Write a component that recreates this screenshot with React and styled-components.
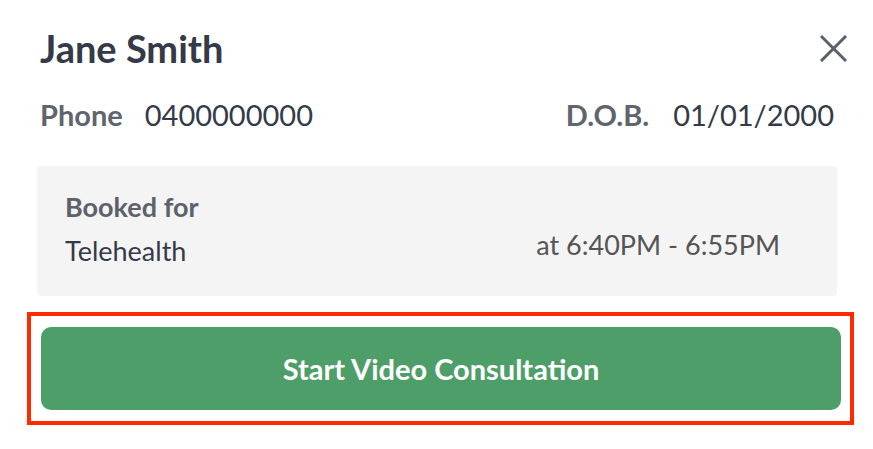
import React from 'react';
import styled, { createGlobalStyle } from 'styled-components';

const GlobalStyle = createGlobalStyle`
  body {
    margin: 0;
    background: #ffffff;
    font-family: Lato, "Open Sans", sans-serif;
  }
`;

const Panel = styled.div`
  width: 800px;
  padding: 26px 36px 0 37px;
`;

const Header = styled.div`
  display: flex;
  align-items: center;
  justify-content: space-between;
  padding-left: 3px;
`;

const Name = styled.h1`
  margin: 0;
  font-size: 38px;
  font-weight: 700;
  line-height: 1.2;
  color: #343a48;
`;

const CloseButton = styled.button`
  display: flex;
  align-items: center;
  justify-content: center;
  margin-right: -10px;
  padding: 0;
  border: none;
  background: transparent;
  color: #5c6068;
  cursor: pointer;
`;

const InfoRow = styled.div`
  display: flex;
  justify-content: space-between;
  margin-top: 26px;
  padding: 0 3px;
`;

const Field = styled.div`
  display: flex;
  align-items: baseline;
  gap: ${(p) => p.$gap || 22}px;
`;

const Label = styled.span`
  font-size: 29px;
  font-weight: 700;
  line-height: 1.2;
  color: #60646d;
`;

const Value = styled.span`
  font-size: 29px;
  font-weight: 400;
  line-height: 1.2;
  color: #343a48;
`;

const BookingCard = styled.div`
  display: flex;
  justify-content: space-between;
  margin-top: 34px;
  padding: 23px 57px 27px 28px;
  background: #f4f4f4;
  border-radius: 4px;
`;

const BookingInfo = styled.div`
  display: flex;
  flex-direction: column;
  gap: 9px;
`;

const BookingLabel = styled.span`
  font-size: 27px;
  font-weight: 700;
  line-height: 1.3;
  color: #5c616b;
`;

const BookingType = styled.span`
  font-size: 27px;
  line-height: 1.3;
  color: #343a48;
`;

const BookingTime = styled.span`
  align-self: flex-end;
  margin-bottom: 6px;
  font-size: 27px;
  line-height: 1.3;
  color: #555555;
`;

const Highlight = styled.div`
  box-sizing: border-box;
  width: 827px;
  margin: 16px 0 0 -10px;
  padding: 11px 9px 11px 10px;
  border: 4px solid #ff2a00;
`;

const StartButton = styled.button`
  display: block;
  width: 100%;
  height: 83px;
  border: none;
  border-radius: 10px;
  background: #4e9e69;
  color: #ffffff;
  font-family: inherit;
  font-size: 29px;
  font-weight: 700;
  cursor: pointer;
`;

const CloseIcon = () => (
  <svg width="27" height="27" viewBox="0 0 27 27" fill="none">
    <path d="M2 2L25 25M25 2L2 25" stroke="currentColor" strokeWidth="3" strokeLinecap="square" />
  </svg>
);

export default function App() {
  return (
    <>
      <GlobalStyle />
      <Panel>
        <Header>
          <Name>Jane Smith</Name>
          <CloseButton aria-label="Close">
            <CloseIcon />
          </CloseButton>
        </Header>

        <InfoRow>
          <Field>
            <Label>Phone</Label>
            <Value>0400000000</Value>
          </Field>
          <Field $gap={24}>
            <Label>D.O.B.</Label>
            <Value>01/01/2000</Value>
          </Field>
        </InfoRow>

        <BookingCard>
          <BookingInfo>
            <BookingLabel>Booked for</BookingLabel>
            <BookingType>Telehealth</BookingType>
          </BookingInfo>
          <BookingTime>at 6:40PM - 6:55PM</BookingTime>
        </BookingCard>

        <Highlight>
          <StartButton>Start Video Consultation</StartButton>
        </Highlight>
      </Panel>
    </>
  );
}
